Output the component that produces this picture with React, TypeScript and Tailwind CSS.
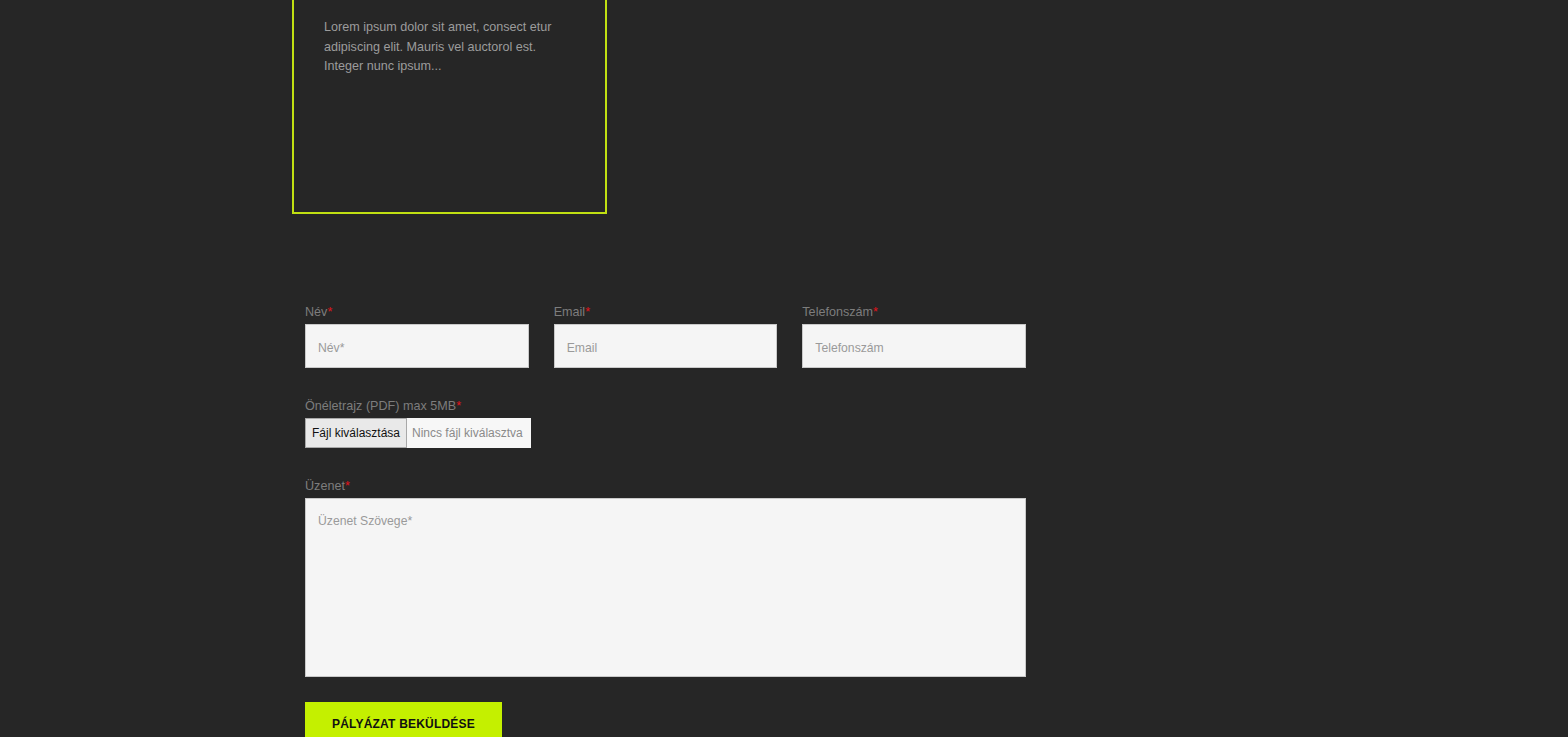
const FONT = "font-['Liberation_Sans',Arial,sans-serif]"

function Label({ text }: { text: string }) {
  return (
    <div className="h-[19px] text-[12.6px] leading-[16px] text-[#7d7d7d]">
      {text}
      <span className="text-[#e2131b]">*</span>
    </div>
  )
}

function TextField({ label, placeholder }: { label: string; placeholder: string }) {
  return (
    <div className="flex flex-col gap-px">
      <Label text={label} />
      <input
        placeholder={placeholder}
        className="h-[44px] w-full border border-[#c9c9c9] bg-[#f5f5f5] px-[12px] pt-[3px] text-[12.2px] text-[#333] placeholder:text-[#9a9a9a] outline-none"
      />
    </div>
  )
}

export default function App() {
  return (
    <div className={`min-h-screen overflow-hidden bg-[#262626] ${FONT}`}>
      <div className="ml-[292px] w-[734px]">
        <div className="-mt-[10px] h-[224px] w-[315px] border-2 border-[#c0df12] px-[30px] pt-[26px]">
          <p className="text-[12.6px] leading-[19.5px] text-[#9c9c9c]">
            Lorem ipsum dolor sit amet, consect etur adipiscing elit. Mauris vel auctorol est.
            Integer nunc ipsum...
          </p>
        </div>

        <form className="ml-[13px] mt-[90px] w-[721px]" onSubmit={(e) => e.preventDefault()}>
          <div className="grid grid-cols-3 gap-[25px]">
            <TextField label="Név" placeholder="Név*" />
            <TextField label="Email" placeholder="Email" />
            <TextField label="Telefonszám" placeholder="Telefonszám" />
          </div>

          <div className="mt-[30px] flex flex-col gap-px">
            <Label text="Önéletrajz (PDF) max 5MB" />
            <div className="flex h-[30px] w-[226px] items-stretch bg-[#f7f7f7] text-[12px]">
              <button
                type="button"
                className="whitespace-nowrap border border-[#a8a8a8] bg-[#e9e9e9] px-[6px] text-[#111]"
              >
                Fájl kiválasztása
              </button>
              <span className="flex items-center whitespace-nowrap pl-[5px] text-[#8a8a8a]">
                Nincs fájl kiválasztva
              </span>
            </div>
          </div>

          <div className="mt-[30px] flex flex-col gap-px">
            <Label text="Üzenet" />
            <textarea
              placeholder="Üzenet Szövege*"
              className="h-[179px] w-full resize-none border border-[#c9c9c9] bg-[#f5f5f5] px-[12px] pb-[12px] pt-[13px] text-[12.2px] leading-[19px] text-[#333] placeholder:text-[#9a9a9a] outline-none"
            />
          </div>

          <button
            type="submit"
            className="mt-[25px] h-[44px] w-[197px] bg-[#c4f000] text-[12px] font-bold tracking-[0.2px] text-[#111]"
          >
            PÁLYÁZAT BEKÜLDÉSE
          </button>
        </form>
      </div>
    </div>
  )
}
